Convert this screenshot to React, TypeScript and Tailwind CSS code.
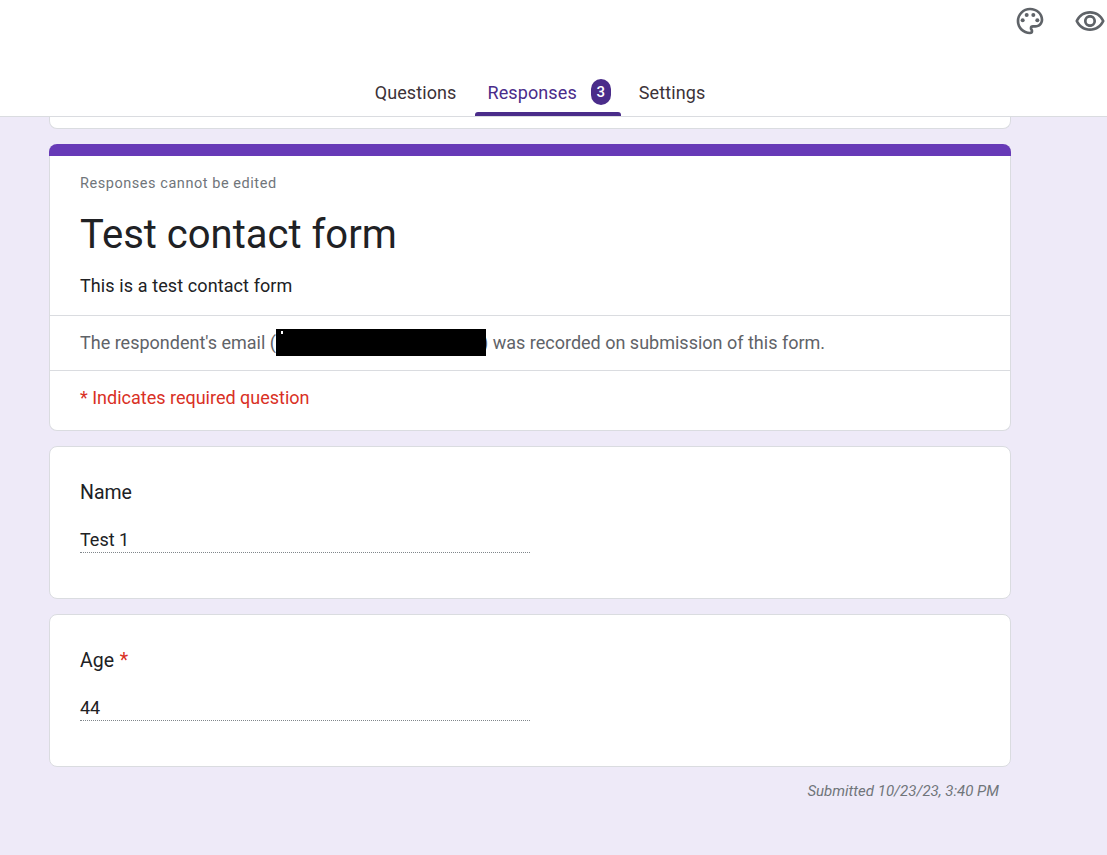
import { MdOutlinePalette, MdOutlineRemoveRedEye } from "react-icons/md";

const Tab = ({ label, active, badge }: { label: string; active?: boolean; badge?: string }) => (
  <div className={`relative h-full flex items-center pb-[3px] pl-[13px] ${badge ? "pr-[10px]" : "pr-[13px]"} ${active ? "text-[#4a2c8a]" : "text-[#3c3238]"}`}>
    <span className="font-['Roboto',sans-serif] text-[18px] font-normal tracking-[0.1px] leading-6">{label}</span>
    {badge && (
      <span className="ml-[14px] mb-[1px] w-[20px] h-[26px] rounded-[10px] bg-[#4a2c8a] text-white text-[15px] font-medium flex items-center justify-center font-['Roboto',sans-serif]">
        {badge}
      </span>
    )}
    {active && <div className="absolute left-0 right-0 bottom-0 h-1 rounded-t-[3px] bg-[#4a2c8a]" />}
  </div>
);

const AnswerCard = ({ label, value, required }: { label: string; value: string; required?: boolean }) => (
  <section className="mt-[15px] h-[153px] bg-white border border-[#dadce0] rounded-lg pl-[30px] pt-[34px]">
    <div className="text-[19.5px] leading-6 text-[#202124]">
      {label}
      {required && <span className="ml-[1px] text-[#d93025]"> *</span>}
    </div>
    <div className="mt-[23px] w-[450px] h-[25px] border-b border-dotted border-[#80868b] text-[18px] leading-6 text-[#202124]">
      {value}
    </div>
  </section>
);

export default function App() {
  return (
    <div className="w-[1107px] h-[855px] overflow-hidden bg-[#eeeaf8] font-['Roboto',sans-serif]">
      <header className="relative h-[117px] bg-white border-b border-[#dadce0]">
        <div className="absolute right-[1px] top-[5px] flex items-center gap-[28px] text-[#5f6368]">
          <MdOutlinePalette className="w-[32px] h-[32px]" />
          <MdOutlineRemoveRedEye className="w-[32px] h-[32px]" />
        </div>
        <nav className="h-full flex items-end justify-center pr-[27px]">
          <div className="h-[44px] flex items-stretch gap-[5px]">
            <Tab label="Questions" />
            <Tab label="Responses" active badge="3" />
            <Tab label="Settings" />
          </div>
        </nav>
      </header>

      <main className="w-[962px] ml-[49px]">
        <div className="h-3 bg-white border-x border-b border-[#dadce0] rounded-b-lg" />

        <section className="mt-[15px] h-[287px] bg-white border border-t-0 border-[#dadce0] rounded-lg">
          <div className="-mx-px h-3 rounded-t-lg bg-[#673ab7]" />
          <div className="pl-[30px] pt-[19px] h-[159px]">
            <p className="text-[14.5px] leading-[18px] tracking-[0.55px] text-[#70757a]">Responses cannot be edited</p>
            <h1 className="mt-[18px] text-[40px] leading-[48px] text-[#202124]">Test contact form</h1>
            <p className="mt-[15px] text-[18px] tracking-[0.1px] leading-6 text-[#202124]">This is a test contact form</p>
          </div>
          <div className="h-[55px] border-t border-[#dadce0] pl-[30px] pb-[1px] flex items-center text-[18px] text-[#5f6368] whitespace-nowrap">
            <span>The respondent's email (</span>
            <span className="relative inline-block w-[206px] h-5">
              <span className="absolute left-0 top-[-4px] w-[210px] h-[27px] bg-black" />
              <span className="absolute left-[5px] top-[-2px] w-[2px] h-[3px] bg-white" />
            </span>
            <span>) was recorded on submission of this form.</span>
          </div>
          <div className="h-[60px] border-t border-[#dadce0] pl-[30px] pb-[6px] flex items-center text-[18px] text-[#d93025]">
            * Indicates required question
          </div>
        </section>

        <AnswerCard label="Name" value="Test 1" />
        <AnswerCard label="Age" value="44" required />

        <p className="mt-[15px] pr-[12px] text-right text-[15px] leading-[18px] italic text-[#70757a]">
          Submitted 10/23/23, 3:40 PM
        </p>
      </main>
    </div>
  );
}
